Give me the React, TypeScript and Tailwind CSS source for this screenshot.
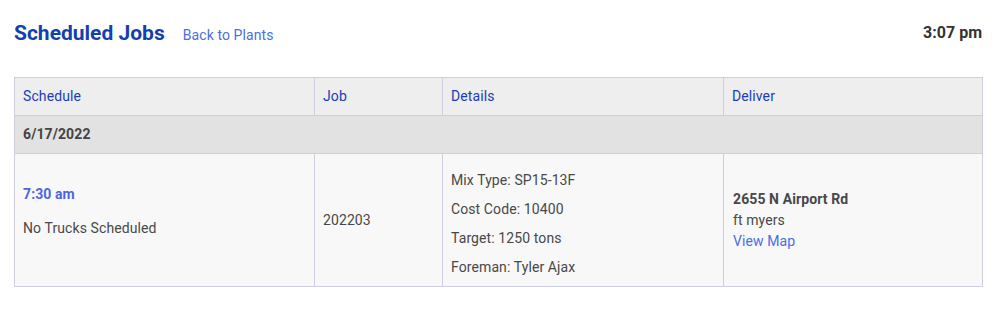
import React from "react";

export default function App() {
  const border = "border border-[#cfcde0]";
  return (
    <div className="min-h-[311px] bg-white pl-[14px] pr-[15px] pt-[19px] text-[14px] text-[#484848]" style={{ fontFamily: "Roboto, 'Noto Sans', sans-serif" }}>
      <div className="flex items-center justify-between h-[28px]">
        <div className="flex items-center">
          <h1 className="text-[21px] font-bold leading-[28px] text-[#1240ae]">Scheduled Jobs</h1>
          <a className="ml-[18px] mt-[3px] text-[14px] leading-[20px] tracking-[0.1px] text-[#4a6ee6]">Back to Plants</a>
        </div>
        <div className="text-[16px] font-bold leading-[28px] text-[#333333]">3:07 pm</div>
      </div>
      <table className="mt-[30px] w-[968px] border-collapse table-fixed tracking-[0.1px]">
        <colgroup>
          <col className="w-[300px]" />
          <col className="w-[128px]" />
          <col className="w-[281px]" />
          <col className="w-[259px]" />
        </colgroup>
        <thead>
          <tr className="bg-[#eeeeee]">
            {["Schedule", "Job", "Details", "Deliver"].map((h) => (
              <th key={h} className={`${border} h-[38px] px-[8px] pt-0 pb-[1px] text-left font-normal leading-[20px] text-[#1a3db8]`}>
                {h}
              </th>
            ))}
          </tr>
        </thead>
        <tbody>
          <tr className="bg-[#e2e2e2]">
            <td colSpan={4} className={`${border} h-[38px] px-[8px] pt-0 pb-[1px] font-bold leading-[20px] text-[#444444]`}>
              6/17/2022
            </td>
          </tr>
          <tr className="bg-[#f8f8f8]">
            <td className={`${border} px-[8px] pt-[30px] align-top leading-[20px]`}>
              <div className="font-bold text-[#4f63e6]">7:30 am</div>
              <div className="mt-[14px]">No Trucks Scheduled</div>
            </td>
            <td className={`${border} px-[8px] align-middle leading-[20px]`}>202203</td>
            <td className={`${border} px-[8px] pt-[7px] pb-[9px] align-top leading-[20px]`}>
              <p className="mt-[9px]">Mix Type: SP15-13F</p>
              <p className="mt-[9px]">Cost Code: 10400</p>
              <p className="mt-[9px]">Target: 1250 tons</p>
              <p className="mt-[9px]">Foreman: Tyler Ajax</p>
            </td>
            <td className={`${border} px-[9px] align-middle leading-[21px]`}>
              <div className="font-bold">2655 N Airport Rd</div>
              <div>ft myers</div>
              <a className="text-[#4a6ee6]">View Map</a>
            </td>
          </tr>
        </tbody>
      </table>
    </div>
  );
}
